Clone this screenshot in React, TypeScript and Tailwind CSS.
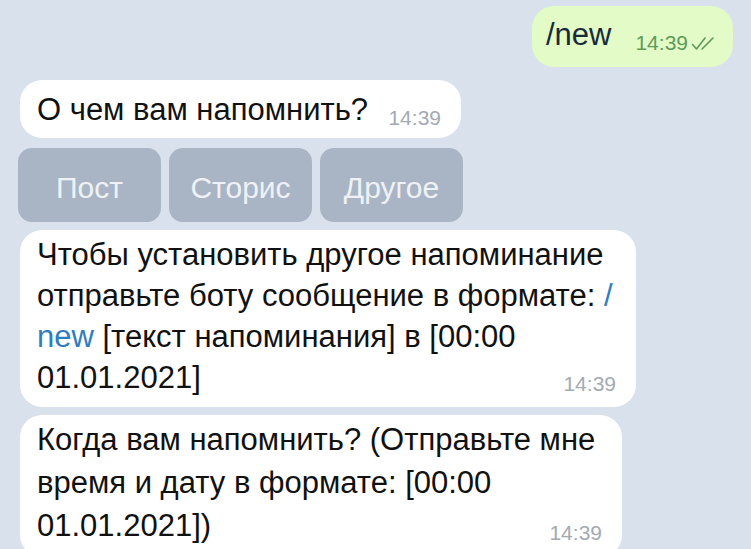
import React from "react";

const font = { fontFamily: '"Liberation Sans", Arial, sans-serif' };

function Checks() {
  return (
    <svg width="26" height="16" viewBox="0 0 26 16" fill="none" aria-hidden="true">
      <path d="M1.5 9.5l4 4.5L14 3" stroke="#5f9a58" strokeWidth="1.6" strokeLinecap="round" strokeLinejoin="round" />
      <path d="M11 14L22 3" stroke="#5f9a58" strokeWidth="1.6" strokeLinecap="round" />
    </svg>
  );
}

function Time({ className = "" }: { className?: string }) {
  return <span className={`text-[21px] text-[#a3aab3] leading-none ${className}`}>14:39</span>;
}

function Bubble({ children, className = "" }: { children: React.ReactNode; className?: string }) {
  return (
    <div className={`shrink-0 bg-white rounded-[22px] pl-[17px] pr-[20px] ${className}`}>{children}</div>
  );
}

export default function App() {
  const keys = ["Пост", "Сторис", "Другое"];
  return (
    <div
      className="w-[751px] h-[549px] overflow-hidden bg-[#d8e1ec] text-[#111] flex flex-col pt-[6px] pl-[20px]"
      style={font}
    >
      {/* outgoing */}
      <div className="shrink-0 flex justify-end pr-[18px]">
        <div className="bg-[#e2fbc7] rounded-[22px] h-[61px] pl-[14px] pr-[16px] flex items-center">
          <span className="text-[31px] text-[#1a2a3c] leading-none -mt-[4px]">/new</span>
          <span className="ml-[24px] flex items-center gap-[3px] mt-[12px]">
            <span className="text-[21px] text-[#5f9a58] leading-none">14:39</span>
            <Checks />
          </span>
        </div>
      </div>

      {/* question */}
      <Bubble className="mt-[13px] w-[441px] h-[58px] flex items-center">
        <span className="text-[31px] leading-none">О чем вам напомнить?</span>
        <Time className="ml-auto mt-[16px]" />
      </Bubble>

      {/* inline keyboard */}
      <div className="shrink-0 mt-[10px] -ml-[2px] flex gap-[8px]">
        {keys.map((k) => (
          <div
            key={k}
            className="w-[143px] h-[74px] rounded-[14px] bg-[#a9b5c4] flex items-center justify-center pt-[4px] text-[30px] text-[#eef2f6]"
          >
            {k}
          </div>
        ))}
      </div>

      {/* instructions */}
      <Bubble className="mt-[8px] w-[616px] pt-[4px] pb-[9px] text-[31px] leading-[41px]">
        <div>Чтобы установить другое напоминание</div>
        <div>
          отправьте боту сообщение в формате: <span className="text-[#2f7dc1]">/</span>
        </div>
        <div>
          <span className="text-[#2f7dc1]">new</span> [текст напоминания] в [00:00
        </div>
        <div className="flex items-end">
          <span>01.01.2021]</span>
          <Time className="ml-auto mb-[4px]" />
        </div>
      </Bubble>

      {/* when */}
      <Bubble className="mt-[8px] w-[602px] pt-[3px] pb-[10px] text-[31px] leading-[43px]">
        <div>Когда вам напомнить? (Отправьте мне</div>
        <div>время и дату в формате: [00:00</div>
        <div className="flex items-end">
          <span>01.01.2021])</span>
          <Time className="ml-auto mb-[4px]" />
        </div>
      </Bubble>
    </div>
  );
}
